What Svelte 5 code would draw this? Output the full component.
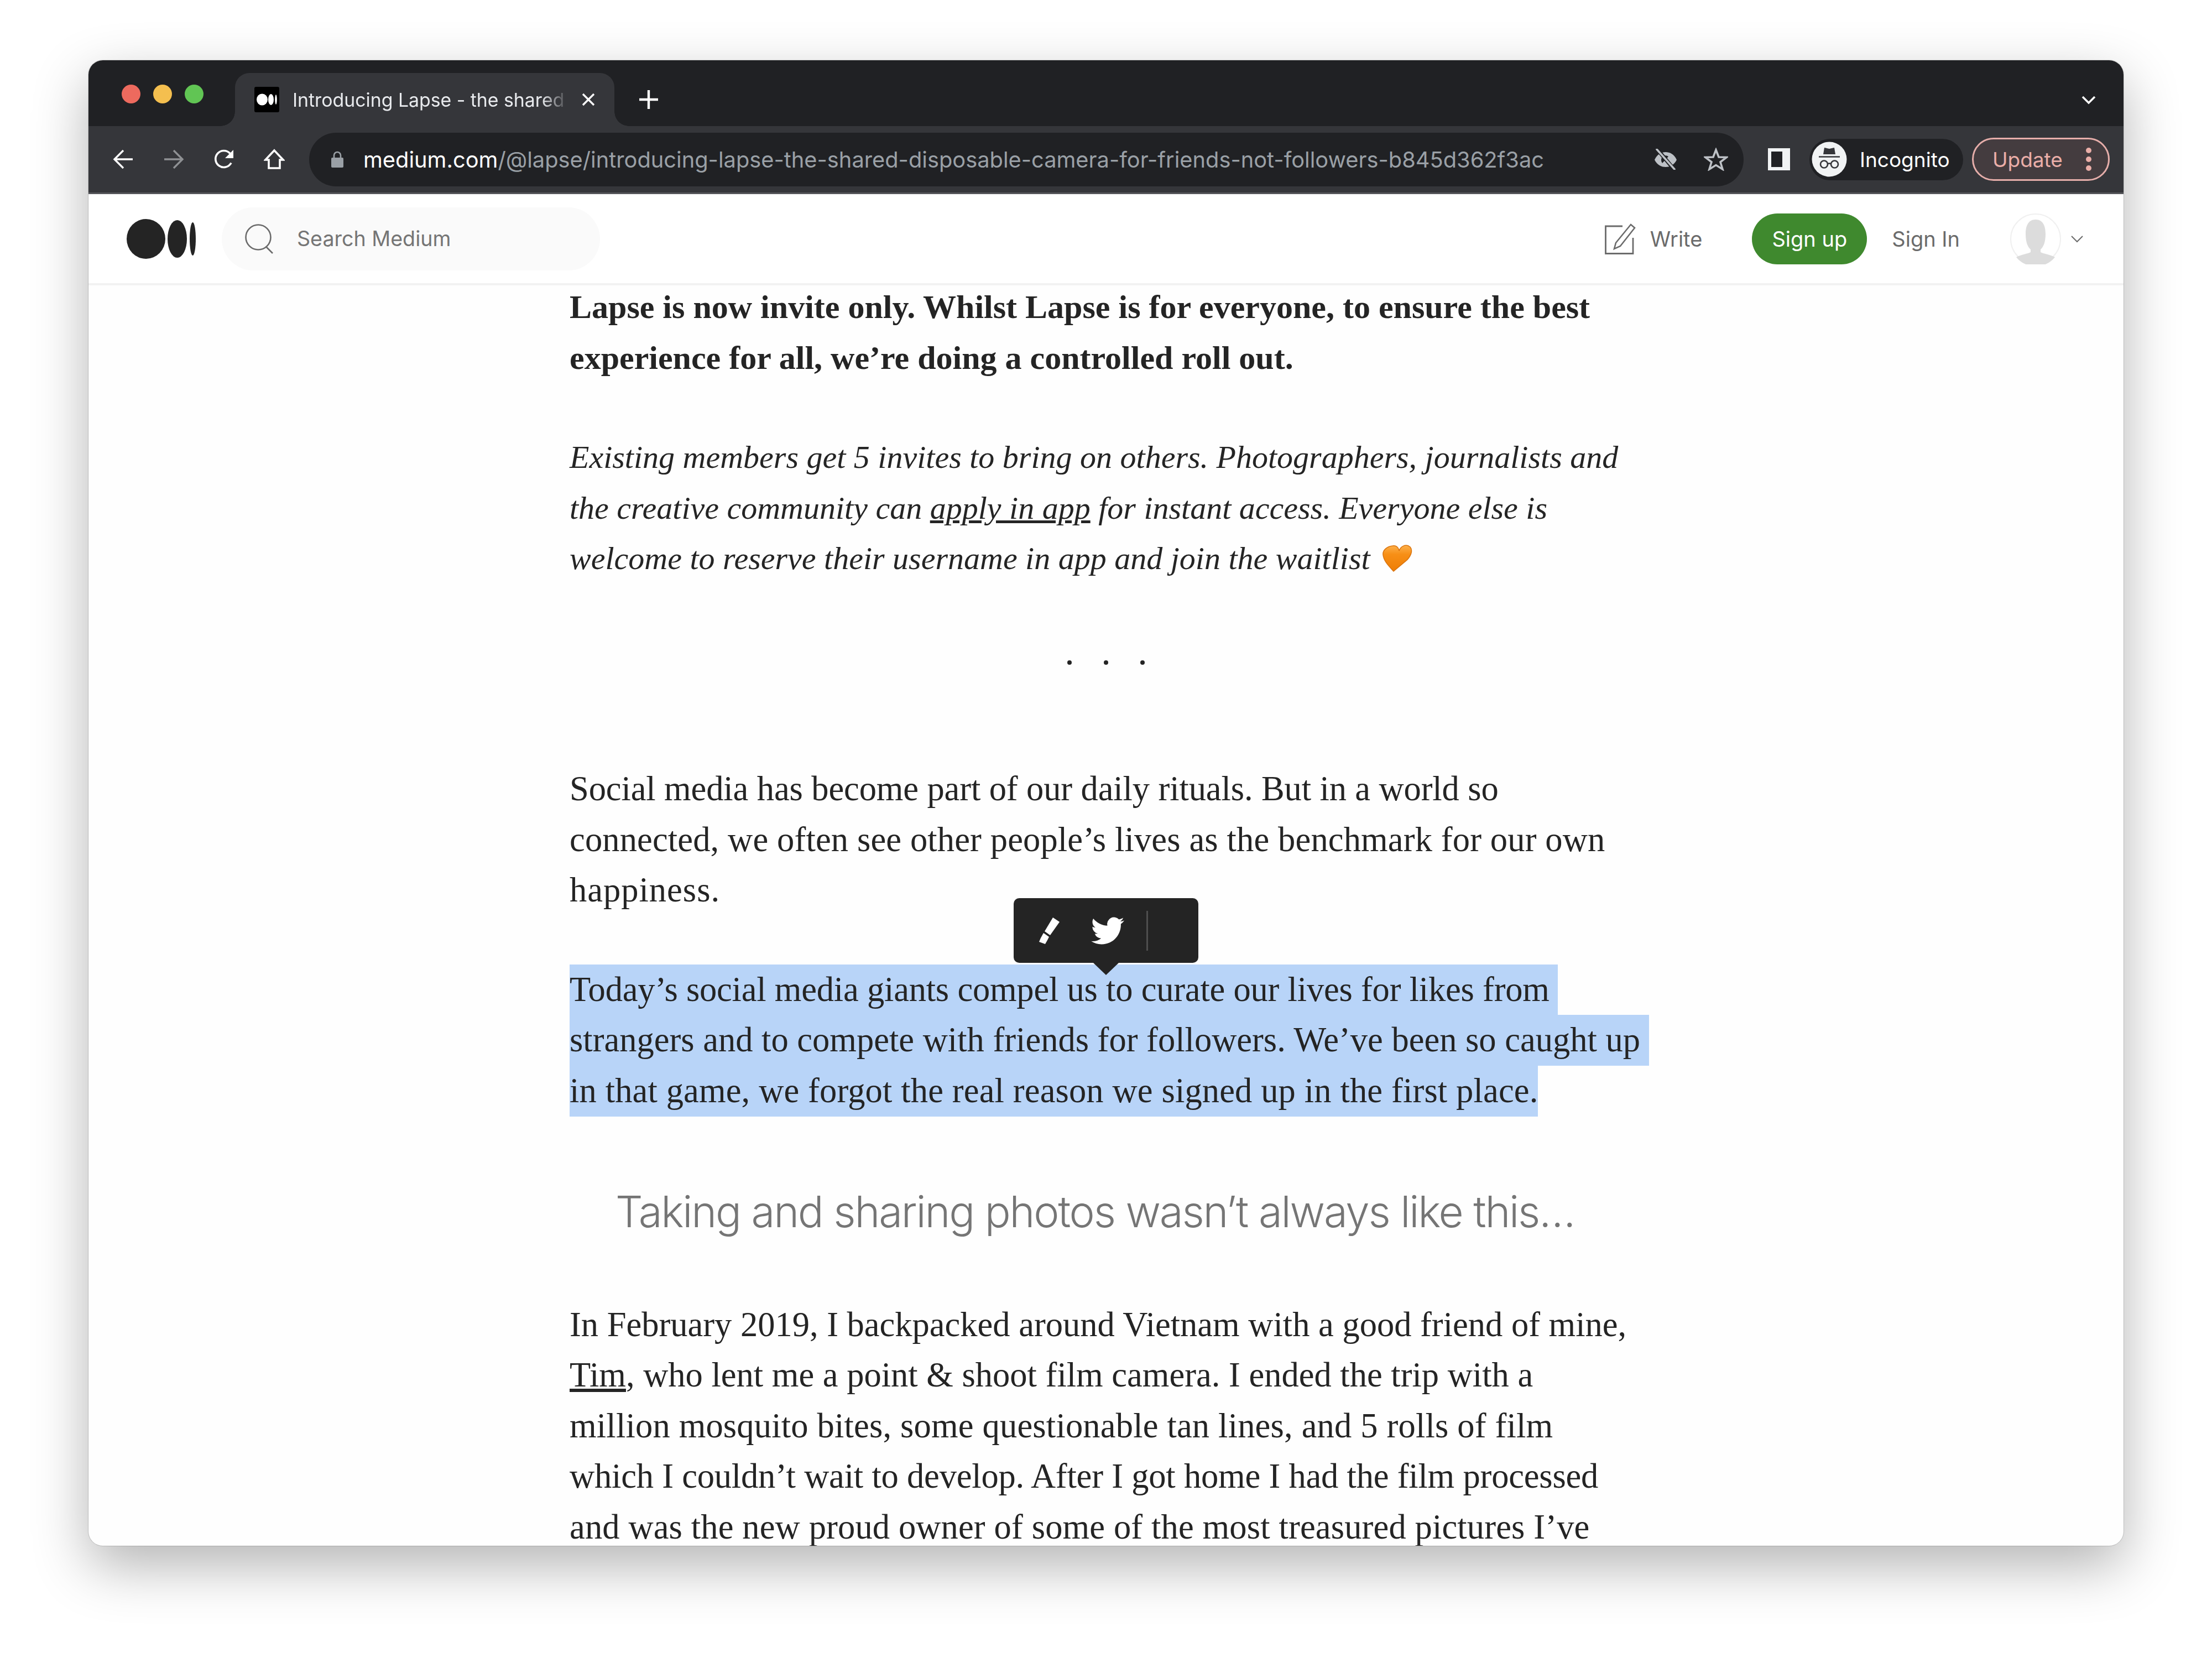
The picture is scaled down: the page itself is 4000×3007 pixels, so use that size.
<script>
	// [text, letter-spacing in px], the serif runs a little off per line
	const social = [
		['Social media has become part of our daily rituals. But in a world so', -0.11],
		['connected, we often see other people’s lives as the benchmark for our own', 0.14],
		['happiness.', 1]
	];
	const selected = [
		['Today’s social media giants compel us to curate our lives for likes from ', -0.21],
		['strangers and to compete with friends for followers. We’ve been so caught up ', 0],
		['in that game, we forgot the real reason we signed up in the first place.', 0.14]
	];
	const story = [
		['million mosquito bites, some questionable tan lines, and 5 rolls of film', 0.18],
		['which I couldn’t wait to develop. After I got home I had the film processed', -0.2],
		['and was the new proud owner of some of the most treasured pictures I’ve', 0.14]
	];
	const lead = [
		'Lapse is now invite only. Whilst Lapse is for everyone, to ensure the best',
		'experience for all, we’re doing a controlled roll out.'
	];
</script>

<div class="stage">
	<div class="window">
		<div class="tabstrip">
			<div class="lights">
				<span class="light red"></span>
				<span class="light yellow"></span>
				<span class="light green"></span>
			</div>
			<div class="tab">
				<span class="favicon">
					<svg viewBox="0 0 45 46" width="45" height="46">
						<ellipse cx="14" cy="23" rx="10" ry="10.5" fill="#fff" />
						<ellipse cx="30" cy="23" rx="5" ry="10" fill="#fff" />
						<ellipse cx="39" cy="23" rx="1.8" ry="9" fill="#fff" />
					</svg>
				</span>
				<span class="tab-title">Introducing Lapse - the shared</span>
				<svg class="tab-close" viewBox="0 0 24 24" width="24" height="24">
					<path d="M2 2 22 22M22 2 2 22" stroke="#fff" stroke-width="3.4" fill="none" />
				</svg>
			</div>
			<svg class="new-tab" viewBox="0 0 34 34" width="34" height="34">
				<path d="M17 0v34M0 17h34" stroke="#fff" stroke-width="4.4" stroke-linecap="round" />
			</svg>
			<svg class="tab-list" viewBox="0 0 26 16" width="26" height="16">
				<path d="M2 2 13 13 24 2" stroke="#fff" stroke-width="3.6" fill="none" />
			</svg>
		</div>

		<div class="toolbar">
			<svg class="tool" viewBox="0 0 38 38" width="38" height="38">
				<path d="M36 19H4M19 3 3 19 19 35" stroke="#fff" stroke-width="3.4" fill="none" />
			</svg>
			<svg class="tool" viewBox="0 0 38 38" width="38" height="38">
				<path d="M2 19h32M19 3l16 16-16 16" stroke="#8f9194" stroke-width="3.4" fill="none" />
			</svg>
			<svg class="tool" viewBox="0 0 38 38" width="38" height="38">
				<path d="M32 25.500A15 15 0 1 1 30 8.500" stroke="#fff" stroke-width="3.6" fill="none" />
				<path d="M36 2v15H21z" fill="#fff" />
			</svg>
			<svg class="tool" viewBox="0 0 38 38" width="38" height="38">
				<path d="M19 3 35 20H29V35H9V20H3Z" stroke="#fff" stroke-width="3.6" fill="none" />
			</svg>
			<div class="omnibox">
				<svg viewBox="0 0 24 30" width="24" height="30">
					<path d="M6 13V8a6 6 0 0 1 12 0v5" stroke="#9aa0a6" stroke-width="2.6" fill="none" />
					<rect x="1" y="12" width="22" height="18" rx="2" fill="#9aa0a6" />
				</svg>
				<span class="url"><b>medium.com</b>/@lapse/introducing-lapse-the-shared-disposable-camera-for-friends-not-followers-b845d362f3ac</span>
				<svg class="eye" viewBox="0 0 42 38" width="42" height="38">
					<path d="M1 20C6 9 14 6 21 6s15 3 20 14c-5 10-13 13-20 13S6 30 1 20Z" fill="#bdc1c6" />
					<path d="M13 20a8 8 0 0 1 13-6L15 26a8 8 0 0 1-2-6Z" fill="#202124" />
					<path d="M5 0 36 37" stroke="#202124" stroke-width="7" />
					<path d="M5 1 37 37" stroke="#bdc1c6" stroke-width="3.6" stroke-linecap="round" />
				</svg>
				<svg class="star" viewBox="0 0 44 42" width="44" height="42">
					<path d="M22 4 27 17 41 17.500 30 26 34 39 22 31.500 10 39 14 26 3 17.500 17 17Z" stroke="#bdc1c6" stroke-width="3.6" fill="none" />
				</svg>
			</div>
			<span class="side-panel"></span>
			<div class="incognito">
				<svg viewBox="0 0 64 64" width="64" height="64">
					<circle cx="32" cy="32" r="31.500" fill="#f1f3f4" />
					<path d="M21 23 23 11 32 13 41 11 43 23Z" fill="#35363a" />
					<path d="M13 27.500H51" stroke="#35363a" stroke-width="2.6" />
					<circle cx="22.500" cy="41" r="6.500" stroke="#35363a" stroke-width="2.6" fill="none" />
					<circle cx="41.500" cy="41" r="6.500" stroke="#35363a" stroke-width="2.6" fill="none" />
					<path d="M29 40.500q3-2 6 0" stroke="#35363a" stroke-width="2.4" fill="none" />
				</svg>
				<span>Incognito</span>
			</div>
			<div class="update">
				<span>Update</span>
				<span class="kebab"><i></i><i></i><i></i></span>
			</div>
		</div>

		<div class="nav">
			<svg class="logo" viewBox="0 0 125 72" width="125" height="72">
				<ellipse cx="35" cy="36" rx="35" ry="36" fill="#242424" />
				<ellipse cx="91.500" cy="36" rx="17.500" ry="34" fill="#242424" />
				<ellipse cx="119.500" cy="36" rx="5.500" ry="30" fill="#242424" />
			</svg>
			<div class="search">
				<svg viewBox="0 0 52 54" width="52" height="54">
					<circle cx="24" cy="24" r="22.500" stroke="#6b6b6b" stroke-width="2.600" fill="none" />
					<path d="M38 41 50 53" stroke="#6b6b6b" stroke-width="2.600" />
				</svg>
				<span>Search Medium</span>
			</div>
			<div class="nav-right">
				<svg class="write-icon" viewBox="0 0 56 56" width="56" height="56">
					<path d="M32 5H1.500V54.500H51V26" stroke="#6b6b6b" stroke-width="2.800" fill="none" />
					<path d="M47 2 54 8 28 41 17 46 20 35Z" stroke="#6b6b6b" stroke-width="2.600" fill="#fff" />
				</svg>
				<span class="write">Write</span>
				<span class="signup">Sign up</span>
				<span class="signin">Sign In</span>
				<svg class="avatar" viewBox="0 0 92 92" width="92" height="92">
					<circle cx="46" cy="46" r="45" fill="#fff" stroke="#f0f0f0" stroke-width="2" />
					<path d="M46 11c-13 0-18 11-18 26 0 15 4 24 9 28v5c-5 3-17 4-26 9a45 45 0 0 0 70 0c-9-5-21-6-26-9v-5c5-4 9-13 9-28 0-15-5-26-18-26Z" fill="#dcdcdc" />
				</svg>
				<svg class="avatar-caret" viewBox="0 0 22 14" width="22" height="14">
					<path d="M1 2 11 12 21 2" stroke="#6b6b6b" stroke-width="2" fill="none" />
				</svg>
			</div>
		</div>

		<div class="article">
			<p class="bold">
				{#each lead as line}<span class="line">{line}</span>{/each}
			</p>
			<p class="italic">
				<span class="line">Existing members get 5 invites to bring on others. Photographers, journalists and</span>
				<span class="line">the creative community can <u>apply in app</u> for instant access. Everyone else is</span>
				<span class="line">welcome to reserve their username in app and join the waitlist <svg class="heart" viewBox="0 0 54 52" width="54" height="52">
						<defs>
							<linearGradient id="heart-fill" x1="0" y1="0" x2="0" y2="1">
								<stop offset="0" stop-color="#fdb04a" />
								<stop offset="0.35" stop-color="#f78f16" />
								<stop offset="1" stop-color="#ee7d05" />
							</linearGradient>
						</defs>
						<path d="M18 4C28 2 30 12 30 13 33 4 43 0 50 6c5 6 2 15-5 23L20 50C13 42 2 32 1 20 0 12 8 5 18 4Z" fill="url(#heart-fill)" stroke="#d9730d" stroke-width="1.500" />
					</svg></span>
			</p>
			<div class="dots"><i></i><i></i><i></i></div>
			<p>
				{#each social as [text, spacing]}<span class="line" style="letter-spacing: {spacing}px">{text}</span>{/each}
			</p>
			<p class="picked">
				{#each selected as [text, spacing]}<span class="line" style="letter-spacing: {spacing}px">{text}</span>{/each}
			</p>
			<h2>Taking and sharing photos wasn’t always like this…</h2>
			<p>
				<span class="line">In February 2019, I backpacked around Vietnam with a good friend of mine,</span>
				<span class="line"><u>Tim</u>, who lent me a point &amp; shoot film camera. I ended the trip with a</span>
				{#each story as [text, spacing]}<span class="line" style="letter-spacing: {spacing}px">{text}</span>{/each}
			</p>
		</div>

		<div class="share-popup">
			<svg viewBox="0 0 38 48" width="38" height="48">
				<path d="M25 0 37 8 20 32 10 25Z" fill="#fff" />
				<path d="M8 28 18 35 15 41 11 48 0 44 3 37Z" fill="#fff" />
			</svg>
			<svg class="bird" viewBox="0 0 24 24" width="60" height="60">
				<path d="M23.953 4.57a10 10 0 01-2.825.775 4.958 4.958 0 002.163-2.723c-.951.555-2.005.959-3.127 1.184a4.92 4.92 0 00-8.384 4.482C7.69 8.095 4.067 6.13 1.64 3.162a4.822 4.822 0 00-.666 2.475c0 1.71.87 3.213 2.188 4.096a4.904 4.904 0 01-2.228-.616v.06a4.923 4.923 0 003.946 4.827 4.996 4.996 0 01-2.212.085 4.936 4.936 0 004.604 3.417 9.867 9.867 0 01-6.102 2.105c-.39 0-.779-.023-1.17-.067a13.995 13.995 0 007.557 2.209c9.053 0 13.998-7.496 13.998-13.985 0-.21 0-.42-.015-.63A9.935 9.935 0 0024 4.59z" fill="#fff" />
			</svg>
			<span class="divider"></span>
		</div>
	</div>
</div>

<style>
	:global(body) {
		background: #fff;
		font-family: Inter, 'Liberation Sans', sans-serif;
	}

	.stage {
		height: 3007px;
		box-sizing: border-box;
		padding: 109px 160px 0;
		overflow: hidden;
		background: #fff;
	}

	.window {
		position: relative;
		width: 3680px;
		height: 2686px;
		display: flex;
		flex-direction: column;
		overflow: hidden;
		background: #fefefe;
		border-radius: 26px;
		box-shadow:
			0 0 0 1px rgba(0, 0, 0, 0.14),
			0 36px 100px rgba(0, 0, 0, 0.3);
	}

	.tabstrip {
		height: 119px;
		flex: none;
		display: flex;
		align-items: flex-start;
		background: #202124;
	}

	.lights {
		display: flex;
		gap: 23px;
		margin: 44px 0 0 60px;
	}

	.light {
		width: 34px;
		height: 34px;
		border-radius: 50%;
	}

	.red {
		background: #ed6a5e;
	}

	.yellow {
		background: #f4bf4f;
	}

	.green {
		background: #61c554;
	}

	.tab {
		position: relative;
		width: 686px;
		height: 96px;
		margin: 23px 0 0 57px;
		padding-left: 35px;
		box-sizing: border-box;
		display: flex;
		align-items: center;
		background: #35363a;
		border-radius: 26px 26px 0 0;
	}

	.tab::before,
	.tab::after {
		content: '';
		position: absolute;
		bottom: 0;
		width: 26px;
		height: 26px;
	}

	.tab::before {
		left: -26px;
		background: radial-gradient(circle at 0 0, #202124 25.5px, #35363a 26px);
	}

	.tab::after {
		right: -26px;
		background: radial-gradient(circle at 100% 0, #202124 25.5px, #35363a 26px);
	}

	.favicon {
		flex: none;
		width: 45px;
		height: 46px;
		background: #000;
		border-radius: 3px;
		margin-right: 24px;
	}

	.favicon svg {
		display: block;
	}

	.tab-title {
		width: 500px;
		flex: none;
		white-space: nowrap;
		font-size: 33.8px;
		color: #e8eaed;
		-webkit-mask-image: linear-gradient(to right, #000 90%, transparent 100%);
		mask-image: linear-gradient(to right, #000 90%, transparent 100%);
	}

	.tab-close {
		margin-left: 23px;
	}

	.new-tab {
		margin: 54px 0 0 45px;
	}

	.tab-list {
		margin: 64px 50px 0 auto;
	}

	.toolbar {
		height: 120px;
		flex: none;
		display: flex;
		align-items: center;
		padding-left: 44px;
		background: #35363a;
		border-bottom: 3px solid #55565a;
	}

	.tool {
		margin-right: 53px;
	}

	.tool:nth-child(4) {
		margin-right: 44px;
	}

	.omnibox {
		width: 2594px;
		height: 97px;
		flex: none;
		box-sizing: border-box;
		display: flex;
		align-items: center;
		padding-left: 39px;
		background: #202124;
		border-radius: 49px;
	}

	.url {
		margin-left: 35px;
		font-size: 39.8px;
		white-space: nowrap;
		color: #9aa0a6;
	}

	.url b {
		font-weight: 400;
		color: #fff;
	}

	.eye {
		margin-left: auto;
	}

	.star {
		margin: 0 28px 0 48px;
	}

	.side-panel {
		width: 20px;
		height: 28px;
		margin-left: 44px;
		background: #202124;
		border: solid #f1f3f4;
		border-width: 6px 14px 6px 6px;
	}

	.incognito {
		width: 278px;
		height: 75px;
		margin-left: 35px;
		box-sizing: border-box;
		display: flex;
		align-items: center;
		gap: 23px;
		padding-left: 4px;
		background: #202124;
		border-radius: 38px;
		color: #fff;
		font-size: 37px;
	}

	.update {
		width: 249px;
		height: 78px;
		margin-left: 16px;
		box-sizing: border-box;
		display: flex;
		align-items: center;
		padding-left: 34px;
		background: #443c3f;
		border: 3px solid #e6aeaa;
		border-radius: 39px;
		color: #eaaea8;
		font-size: 37px;
	}

	.kebab {
		display: flex;
		flex-direction: column;
		gap: 6px;
		margin-left: 42px;
	}

	.kebab i {
		width: 10px;
		height: 10px;
		border-radius: 50%;
		background: #eaaea8;
	}

	.nav {
		height: 161px;
		flex: none;
		display: flex;
		align-items: center;
		padding: 0 73px 0 69px;
		position: relative;
		z-index: 1;
		background: #fff;
		border-bottom: 4px solid #f2f2f2;
	}

	.logo {
		margin-right: 47px;
	}

	.search {
		width: 684px;
		height: 114px;
		box-sizing: border-box;
		display: flex;
		align-items: center;
		gap: 42px;
		padding-left: 42px;
		background: #fafafa;
		border-radius: 57px;
		color: #757575;
		font-size: 37.6px;
	}

	.nav-right {
		margin-left: auto;
		display: flex;
		align-items: center;
		color: #6b6b6b;
		font-size: 38px;
	}

	.write {
		margin-left: 26px;
	}

	.signup {
		width: 208px;
		height: 92px;
		margin-left: 90px;
		display: flex;
		align-items: center;
		justify-content: center;
		background: #3f892e;
		border-radius: 46px;
		color: #fff;
	}

	.signin {
		margin-left: 45px;
	}

	.avatar {
		margin-left: 91px;
	}

	.avatar-caret {
		margin-left: 18px;
	}

	.article {
		flex: 1;
		padding-left: 870px;
		position: relative;
		font-family: 'Liberation Serif', serif;
		font-size: 62.5px;
		line-height: 91.6px;
		color: #242424;
		white-space: nowrap;
	}

	.article p {
		margin: 0 0 88px;
	}

	.article p:first-child {
		margin-top: -6px;
	}

	.line {
		display: block;
		width: fit-content;
		white-space: pre;
	}

	.bold {
		font-size: 60px;
		font-weight: 700;
	}

	.italic {
		font-size: 58px;
		font-style: italic;
	}

	.heart {
		vertical-align: -6px;
		margin-left: 8px;
	}

	.dots {
		width: 1940px;
		height: 237px;
		display: flex;
		justify-content: center;
		align-items: flex-start;
		gap: 58px;
		padding-top: 50px;
		box-sizing: border-box;
	}

	.dots i {
		width: 8px;
		height: 8px;
		border-radius: 50%;
		background: #242424;
	}

	.article .picked {
		margin-bottom: 0;
	}

	.picked .line {
		background: #b8d4f8;
	}

	h2 {
		width: 1900px;
		margin: 0;
		padding: 124px 0 111px;
		text-align: center;
		font-family: Inter, sans-serif;
		font-size: 78px;
		font-weight: 300;
		line-height: 96px;
		letter-spacing: -2.2px;
		color: #757575;
	}

	.share-popup {
		position: absolute;
		left: 1673px;
		top: 1515px;
		width: 334px;
		height: 117px;
		box-sizing: border-box;
		display: flex;
		align-items: center;
		padding-left: 46px;
		background: #242424;
		border-radius: 10px;
	}

	.share-popup::after {
		content: '';
		position: absolute;
		left: 144px;
		top: 117px;
		border: solid transparent;
		border-width: 22px 23px 0;
		border-top-color: #242424;
	}

	.bird {
		margin-left: 56px;
	}

	.divider {
		width: 3px;
		height: 72px;
		margin-left: 40px;
		background: #4e4e4e;
	}
</style>
